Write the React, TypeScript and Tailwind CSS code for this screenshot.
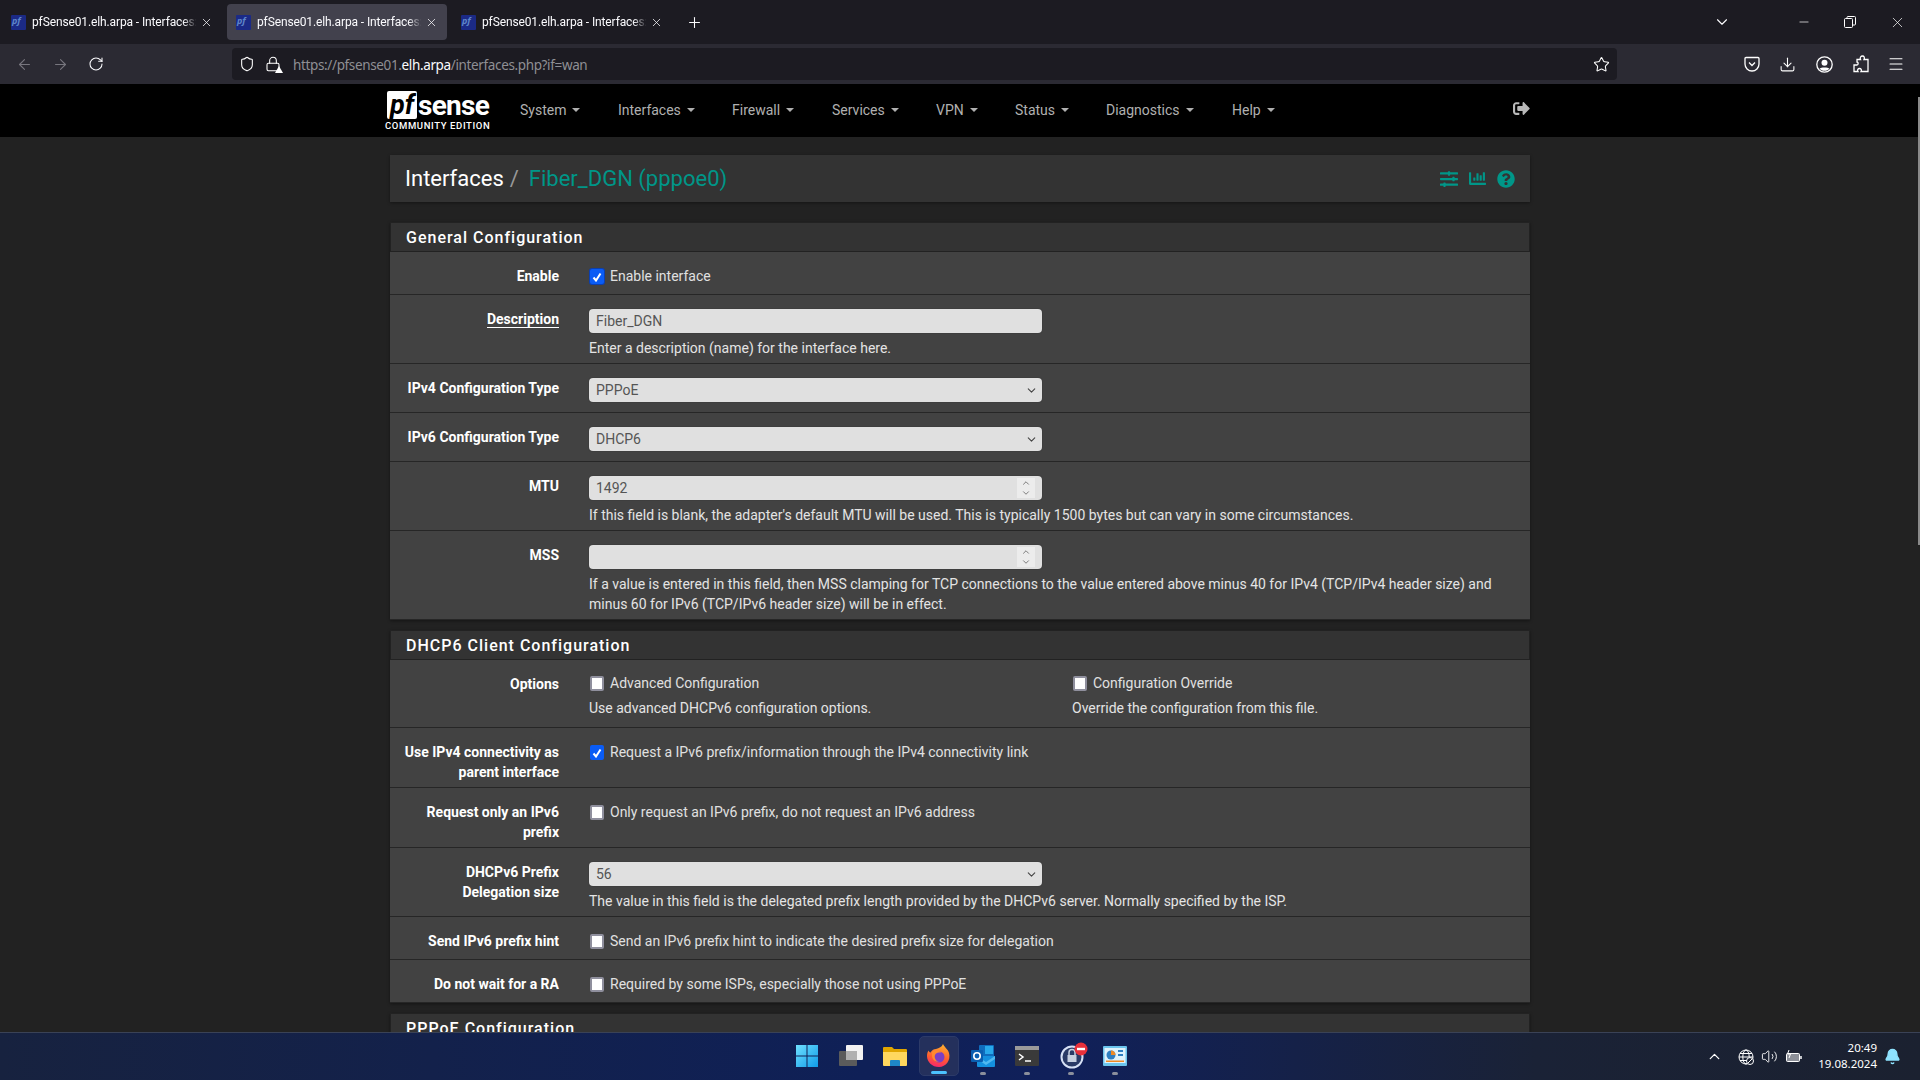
import { ReactNode } from "react";
import {
  ArrowLeft,
  ArrowRight,
  ChevronDown,
  ChevronUp,
  Download,
  Lock,
  Menu,
  Minus,
  Plus,
  RotateCw,
  Shield,
  Star,
  Volume2,
  X,
  Bell,
} from "lucide-react";
import { FaChartBar, FaQuestionCircle, FaSignOutAlt, FaSlidersH } from "react-icons/fa";

const menus = [
  { name: "System", w: "w-[98px]" },
  { name: "Interfaces", w: "w-[114px]" },
  { name: "Firewall", w: "w-[100px]" },
  { name: "Services", w: "w-[104px]" },
  { name: "VPN", w: "w-[79px]" },
  { name: "Status", w: "w-[91px]" },
  { name: "Diagnostics", w: "w-[126px]" },
  { name: "Help", w: "w-[60px]" },
];

export default function App() {
  return (
    <div className="flex h-screen w-full flex-col overflow-hidden bg-[#222222] font-['Roboto',sans-serif] text-sm text-[#e0e0e0]">
      <BrowserChrome />
      <div className="relative min-h-0 flex-1 overflow-hidden">
        <NavBar />
        <main className="mx-auto w-[1140px]">
          <TitleBar />
          <GeneralPanel />
          <DhcpPanel />
          <Panel title="PPPoE Configuration">
            <div className="h-20" />
          </Panel>
        </main>
        <div className="absolute right-0 top-[13px] h-[448px] w-[2px] bg-[#8a8a8a]" />
      </div>
      <Taskbar />
    </div>
  );
}

function BrowserChrome() {
  return (
    <div className="font-['Noto_Sans',sans-serif] text-white">
      {/* Tabs */}
      <div className="flex h-[44px] items-center bg-[#1c1b22] pl-[2px]">
        <BrowserTab />
        <BrowserTab active />
        <BrowserTab />
        <Plus size={17} strokeWidth={1.5} className="ml-[9px] text-[#fbfbfe]" />
        <div className="flex-1" />
        <ChevronDown size={18} strokeWidth={1.5} className="mr-[66px] text-[#fbfbfe]" />
        <Minus size={14} strokeWidth={1.2} className="mr-[33px]" />
        <svg width="12" height="12" viewBox="0 0 12 12" fill="none" stroke="white" className="mr-[33px]">
          <rect x="0.5" y="2.5" width="8" height="9" rx="1" />
          <path d="M3 2.5V1.5a1 1 0 0 1 1-1h6.5a1 1 0 0 1 1 1V8a1 1 0 0 1-1 1H9" />
        </svg>
        <X size={17} strokeWidth={1} className="mr-[14px]" />
      </div>
      {/* Toolbar */}
      <div className="flex h-[40px] items-center bg-[#2b2a33]">
        <ArrowLeft size={17} strokeWidth={1.5} className="ml-[16px] text-[#77767e]" />
        <ArrowRight size={17} strokeWidth={1.5} className="ml-[19px] text-[#77767e]" />
        <RotateCw size={16} strokeWidth={1.6} className="ml-[19px] text-[#fbfbfe]" />
        <div className="ml-[128px] flex h-[32px] w-[1385px] items-center rounded-[4px] bg-[#1c1b22] pl-[7px]">
          <Shield size={16} strokeWidth={1.6} />
          <span className="relative ml-[10px]">
            <Lock size={16} strokeWidth={1.6} />
            <span className="absolute -bottom-[1px] -right-[2px] h-0 w-0 border-x-[4px] border-b-[7px] border-x-transparent border-b-white" />
          </span>
          <span className="ml-[12px] mt-[3px] text-[13.5px] tracking-[-0.36px] text-[#8f8f94]">
            https://pfsense01.<span className="text-[#fbfbfe]">elh.arpa</span>/interfaces.php?if=wan
          </span>
          <div className="flex-1" />
          <Star size={17} strokeWidth={1.5} className="mr-[7px]" />
        </div>
        <PocketIcon />
        <Download size={17} strokeWidth={1.5} className="ml-[19px]" />
        <UserIcon />
        <PuzzleIcon />
        <Menu size={18} strokeWidth={1.4} className="ml-[18px]" />
      </div>
    </div>
  );
}

function BrowserTab({ active }: { active?: boolean }) {
  return (
    <div
      className={`mr-[5px] flex h-[36px] w-[220px] items-center rounded-[4px] pl-[9px] ${active ? "bg-[#42414d]" : ""}`}
    >
      <Favicon />
      <span className="ml-[6px] mt-[2px] w-[168px] whitespace-nowrap font-['Roboto',sans-serif] text-[12px] tracking-[-0.12px] text-[#fbfbfe] [mask-image:linear-gradient(to_right,black_90%,transparent_98%)]">
        pfSense01.elh.arpa - Interfaces:
      </span>
      <X size={13} strokeWidth={1.4} className="text-[#fbfbfe]" />
    </div>
  );
}

function Favicon() {
  return (
    <div className="flex h-[15px] w-[15px] items-start overflow-hidden rounded-[1px] bg-[#1b2a86]">
      <span className="ml-[1px] text-[9px] font-bold italic leading-[11px] text-[#5f86c9]">pf</span>
    </div>
  );
}

function PocketIcon() {
  return (
    <svg width="16" height="16" viewBox="0 0 16 16" fill="none" stroke="white" strokeWidth="1.3" className="ml-[127px]">
      <path d="M2 1.500h12a1 1 0 0 1 1 1V8a7 7 0 0 1-14 0V2.500a1 1 0 0 1 1-1z" />
      <path d="M5 6.500l3 3 3-3" />
    </svg>
  );
}

function UserIcon() {
  return (
    <svg width="17" height="17" viewBox="0 0 17 17" className="ml-[20px]">
      <circle cx="8.500" cy="8.500" r="7.700" fill="none" stroke="white" strokeWidth="1.300" />
      <circle cx="8.500" cy="6.800" r="3" fill="white" />
      <path d="M3.500 12.500c1.500-1.500 8.500-1.500 10 0-1.200 1.500-3 2.300-5 2.300s-3.800-.8-5-2.300z" fill="white" />
    </svg>
  );
}

function PuzzleIcon() {
  return (
    <svg width="16" height="18" viewBox="0 0 16 18" fill="none" stroke="white" strokeWidth="1.300" className="ml-[20px]">
      <path d="M1 16.500V10h3c1.500 0 1.500-3 0-3V4.500h3.500c-1-2 .5-3.500 2-3.500s2.500 1.500 1.500 3.500H15v12H8c1-1.500 0-3-1.500-3S4 15 5 16.500z" />
    </svg>
  );
}

function NavBar() {
  return (
    <nav className="flex h-[53px] items-center bg-black pb-[2px] pl-[385px] text-[#b0b0b0]">
      <Logo />
      <div className="ml-[29px] flex items-center">
        {menus.map((m) => (
          <div key={m.name} className={`flex items-center ${m.w}`}>
            <span>{m.name}</span>
            <span className="ml-[6px] h-0 w-0 border-x-[4px] border-t-[4px] border-x-transparent border-t-[#b0b0b0]" />
          </div>
        ))}
      </div>
      <FaSignOutAlt size={17} className="mb-[3px] ml-[221px] text-[#b8b8b8]" />
    </nav>
  );
}

function Logo() {
  return (
    <div className="mt-[2px] flex w-[106px] flex-col text-white">
      <div className="flex h-[29px] items-end">
        <span className="ml-[2px] flex h-[28px] w-[30px] items-center justify-center rounded-[2px] bg-white text-[27px] font-bold italic leading-none text-black">
          pf
        </span>
        <span className="ml-[1px] text-[28px] font-bold leading-[27px] tracking-[-0.7px]">sense</span>
      </div>
      <span className="mt-[2px] whitespace-nowrap text-[9.5px] font-medium leading-[10px] tracking-[0.62px]">
        COMMUNITY EDITION
      </span>
    </div>
  );
}

function TitleBar() {
  return (
    <div className="mb-[20px] mt-[18px] flex h-[47px] items-center bg-[#333333] pl-[15px] pr-[15px] text-[22px] shadow-[0_1px_3px_rgba(0,0,0,0.4)]">
      <span className="text-white">Interfaces</span>
      <span className="ml-[6px] text-[#999999]">/</span>
      <span className="ml-[10px] text-[#009688]">Fiber_DGN (pppoe0)</span>
      <div className="flex-1" />
      <div className="flex items-center text-[#009688]">
        <FaSlidersH size={18} />
        <FaChartBar size={17} className="ml-[11px]" />
        <FaQuestionCircle size={18} className="ml-[11px]" />
      </div>
    </div>
  );
}

function Panel({ title, children }: { title: string; children: ReactNode }) {
  return (
    <section className="mt-[10px] bg-[#424242] shadow-[0_1px_3px_rgba(0,0,0,0.4)]">
      <h2 className="flex h-[30px] items-center border-x border-t border-b border-[#222222] bg-[#333333] pl-[15px] pt-[2px] text-[16px] font-medium tracking-[1px] text-white">
        {title}
      </h2>
      {children}
    </section>
  );
}

function Row({ label, link, children }: { label: ReactNode; link?: boolean; children: ReactNode }) {
  return (
    <div className="grid grid-cols-[199px_1fr] border-b border-[#262626]">
      <div className="pb-[5px] pl-[10px] pr-[30px] pt-[14px] text-right font-bold leading-[20px] text-white">
        <span className={link ? "border-b border-white" : ""}>{label}</span>
      </div>
      <div className="pb-[8px] pr-[30px] pt-[14px] leading-[20px]">{children}</div>
    </div>
  );
}

function Check({ checked, focused, label }: { checked?: boolean; focused?: boolean; label: string }) {
  return (
    <label className="flex h-[20px] items-center">
      <span
        className={`ml-[1px] mt-[1px] flex h-[15px] w-[14px] items-center justify-center rounded-[2px] ${checked ? "bg-[#0a5cf5]" : "border-2 border-[#8f8f9d] bg-white"} ${focused ? "ring-1 ring-[#0b3fb0]" : ""}`}
      >
        {checked && (
          <svg width="10" height="10" viewBox="0 0 10 10" fill="none" stroke="white" strokeWidth="2">
            <path d="M1.500 5.500l2.500 3 4.500-7" />
          </svg>
        )}
      </span>
      <span className="ml-[6px]">{label}</span>
    </label>
  );
}

function Help({ children }: { children: ReactNode }) {
  return <div className="mt-[5px] leading-[20px] text-[#e4e4e4]">{children}</div>;
}

const fieldClass =
  "h-[24px] w-[453px] rounded-[4px] bg-[#e0e0e0] pl-[7px] text-sm text-[#555555] outline-none shadow-[0_0_1px_rgba(0,0,0,0.5)]";

function Field({ value }: { value: string }) {
  return <input readOnly defaultValue={value} className={fieldClass} />;
}

function NumberField({ value }: { value: string }) {
  return (
    <div className="relative h-[24px] w-[453px]">
      <input readOnly defaultValue={value} className={fieldClass} />
      <div className="absolute right-[7px] top-[2px] flex h-[20px] w-[18px] flex-col items-center justify-center bg-[#ececec] text-[#666666]">
        <ChevronUp size={10} strokeWidth={2} />
        <ChevronDown size={10} strokeWidth={2} />
      </div>
    </div>
  );
}

function SelectField({ value }: { value: string }) {
  return (
    <div className="relative h-[24px] w-[453px]">
      <select defaultValue={value} className={`${fieldClass} appearance-none`}>
        <option>{value}</option>
      </select>
      <ChevronDown size={13} strokeWidth={2} className="absolute right-[4px] top-[6px] text-[#444444]" />
    </div>
  );
}

function GeneralPanel() {
  return (
    <Panel title="General Configuration">
      <Row label="Enable">
        <Check checked focused label="Enable interface" />
      </Row>
      <Row label="Description" link>
        <div className="-mb-[3px]">
          <Field value="Fiber_DGN" />
          <Help>Enter a description (name) for the interface here.</Help>
        </div>
      </Row>
      <Row label="IPv4 Configuration Type">
        <div className="mb-[2px]">
          <SelectField value="PPPoE" />
        </div>
      </Row>
      <Row label="IPv6 Configuration Type">
        <div className="mb-[2px]">
          <SelectField value="DHCP6" />
        </div>
      </Row>
      <Row label="MTU">
        <div className="-mb-[3px]">
          <NumberField value="1492" />
          <Help>If this field is blank, the adapter's default MTU will be used. This is typically 1500 bytes but can vary in some circumstances.</Help>
        </div>
      </Row>
      <Row label="MSS">
        <div className="-mb-[3px]">
          <NumberField value="" />
          <Help>
            If a value is entered in this field, then MSS clamping for TCP connections to the value entered above minus 40 for IPv4 (TCP/IPv4 header size) and minus 60 for IPv6 (TCP/IPv6 header size) will be in effect.
          </Help>
        </div>
      </Row>
    </Panel>
  );
}

function DhcpPanel() {
  return (
    <Panel title="DHCP6 Client Configuration">
      <Row label="Options">
        <div className="-mt-[1px] mb-[1px] grid grid-cols-[484px_1fr]">
          <div>
            <Check label="Advanced Configuration" />
            <Help>Use advanced DHCPv6 configuration options.</Help>
          </div>
          <div className="-ml-[1px]">
            <Check label="Configuration Override" />
            <Help>Override the configuration from this file.</Help>
          </div>
        </div>
      </Row>
      <Row label="Use IPv4 connectivity as parent interface">
        <Check checked label="Request a IPv6 prefix/information through the IPv4 connectivity link" />
      </Row>
      <Row label="Request only an IPv6 prefix">
        <Check label="Only request an IPv6 prefix, do not request an IPv6 address" />
      </Row>
      <Row label="DHCPv6 Prefix Delegation size">
        <div className="-mb-[3px]">
          <SelectField value="56" />
          <Help>The value in this field is the delegated prefix length provided by the DHCPv6 server. Normally specified by the ISP.</Help>
        </div>
      </Row>
      <Row label="Send IPv6 prefix hint">
        <Check label="Send an IPv6 prefix hint to indicate the desired prefix size for delegation" />
      </Row>
      <Row label="Do not wait for a RA">
        <Check label="Required by some ISPs, especially those not using PPPoE" />
      </Row>
    </Panel>
  );
}

function TaskIcon({ active, dot, children }: { active?: boolean; dot?: boolean; children: ReactNode }) {
  return (
    <div
      className={`relative flex h-[40px] w-[40px] items-center justify-center rounded-[5px] ${active ? "border border-[#2c3a68] bg-[#24305c]" : ""}`}
    >
      {children}
      {active && <span className="absolute bottom-[1px] h-[3px] w-[16px] rounded-full bg-[#4cc2ff]" />}
      {dot && <span className="absolute bottom-[1px] h-[3px] w-[6px] rounded-full bg-[#8b8f9c]" />}
    </div>
  );
}

function Taskbar() {
  return (
    <footer className="relative flex h-[48px] shrink-0 items-center justify-center border-t border-[#3a4256] bg-[linear-gradient(90deg,#17223f_0%,#0f2057_45%,#10205a_55%,#1a2236_80%,#1b2130_100%)] font-['Noto_Sans',sans-serif]">
      <div className="-mt-[1px] ml-[1px] flex items-center gap-[4px]">
        <TaskIcon>
          <svg width="24" height="24" viewBox="0 0 24 24">
            <defs>
              <linearGradient id="win" x1="0" y1="0" x2="1" y2="1">
                <stop offset="0" stopColor="#6fe0ff" />
                <stop offset="1" stopColor="#0f9be8" />
              </linearGradient>
            </defs>
            <path fill="url(#win)" d="M1 1h10.500v10.500H1zM12.500 1H23v10.500H12.500zM1 12.500h10.500V23H1zM12.500 12.500H23V23H12.500z" />
          </svg>
        </TaskIcon>
        <TaskIcon>
          <svg width="24" height="24" viewBox="0 0 24 24">
            <rect x="7" y="1" width="17" height="15" rx="1" fill="#f2f2f2" />
            <rect x="0" y="7" width="18" height="15" rx="1" fill="#5b5b5b" />
            <rect x="7" y="7" width="11" height="9" fill="#b0b0b0" />
          </svg>
        </TaskIcon>
        <TaskIcon>
          <svg width="24" height="24" viewBox="0 0 24 24">
            <path fill="#e0a500" d="M0 4a1 1 0 0 1 1-1h8l2 2h12a1 1 0 0 1 1 1v3H0z" />
            <path fill="#ffd75e" d="M0 8h24v13a1 1 0 0 1-1 1H1a1 1 0 0 1-1-1z" />
            <path fill="#1e88c9" d="M7 17a1 1 0 0 1 1-1h8a1 1 0 0 1 1 1v5H7z" />
          </svg>
        </TaskIcon>
        <TaskIcon active>
          <svg width="24" height="24" viewBox="0 0 24 24">
            <defs>
              <linearGradient id="fox" x1="0.6" y1="0" x2="0.4" y2="1">
                <stop offset="0" stopColor="#ffb02e" />
                <stop offset="0.6" stopColor="#ff5d2e" />
                <stop offset="1" stopColor="#f5266f" />
              </linearGradient>
            </defs>
            <path fill="url(#fox)" d="M16 0c1 3 5 5 6 9 2 7-3 14-10 14S0 18 0 12c0-2 .5-4 1.500-5.500C2 8 3 8.500 3.500 8.500 5 6 7 5 9 5c3-1 6-2 7-5z" />
            <circle cx="12" cy="13" r="5.500" fill="#7b3fc4" />
            <path fill="#ff8a2e" d="M5 8c3-2 7-2 9 1-3-1-5 0-6 2-1 3 1 6 4 7-4 0-7-3-7-6 0-2 0-3 0-4z" />
          </svg>
        </TaskIcon>
        <TaskIcon dot>
          <svg width="24" height="24" viewBox="0 0 24 24">
            <rect x="8" y="1" width="15" height="20" rx="1" fill="#0f6cbd" />
            <rect x="14" y="2" width="8" height="8" fill="#28a8ea" />
            <path fill="#1490df" d="M6 12l18 0v10a1 1 0 0 1-1 1H7a1 1 0 0 1-1-1z" />
            <path fill="#50b8f0" d="M6 12l9 6 9-6v3l-9 6-9-6z" />
            <rect x="0" y="6" width="12" height="12" rx="1" fill="#0a5eb0" />
            <circle cx="6" cy="12" r="3.200" fill="none" stroke="white" strokeWidth="1.600" />
          </svg>
        </TaskIcon>
        <TaskIcon dot>
          <svg width="24" height="20" viewBox="0 0 24 20">
            <rect width="24" height="20" rx="1" fill="#3a3a3a" />
            <rect width="24" height="4" fill="#9a9a9a" />
            <path d="M4 8l4 3-4 3" fill="none" stroke="white" strokeWidth="1.500" />
            <path d="M10 15h6" stroke="white" strokeWidth="1.500" />
          </svg>
        </TaskIcon>
        <TaskIcon dot>
          <svg width="28" height="28" viewBox="0 0 28 28" className="ml-[6px]">
            <circle cx="12" cy="15" r="10.500" fill="#2a3a66" stroke="#d7e1f5" strokeWidth="2" />
            <path d="M9 13v-2.500a3 3 0 0 1 6 0V13" fill="none" stroke="#c7d0e0" strokeWidth="1.500" />
            <rect x="7.500" y="13" width="9" height="7" fill="#c7d0e0" />
            <circle cx="21" cy="7" r="6.500" fill="#e8303a" />
            <rect x="17" y="5.800" width="8" height="2.400" fill="white" />
          </svg>
        </TaskIcon>
        <TaskIcon dot>
          <svg width="24" height="20" viewBox="0 0 24 20">
            <rect width="24" height="20" rx="1" fill="#6cc5ee" />
            <rect x="1.500" y="2" width="21" height="15" fill="#dff3fc" />
            <circle cx="8" cy="9" r="4.500" fill="#2f7fc1" />
            <path d="M8 9V4.500A4.500 4.500 0 0 1 12.500 9z" fill="#f08a24" />
            <rect x="15" y="4" width="5" height="2" fill="#2f7fc1" />
            <rect x="15" y="8" width="5" height="2" fill="#2f7fc1" />
            <rect x="3" y="14.500" width="18" height="1.500" fill="#f08a24" />
          </svg>
        </TaskIcon>
      </div>
      {/* System tray */}
      <div className="absolute right-[19px] top-0 flex h-full items-center text-white">
        <ChevronUp size={17} strokeWidth={1.8} />
        <svg width="16" height="16" viewBox="0 0 16 16" fill="none" stroke="white" strokeWidth="1" className="ml-[15px]">
          <circle cx="8" cy="8" r="7" />
          <ellipse cx="8" cy="8" rx="3.200" ry="7" />
          <path d="M1 8h14M2 4.500h12M2 11.500h12" />
          <circle cx="12" cy="12" r="3.500" fill="#1b2130" stroke="white" />
          <path d="M10 14l4-4" />
        </svg>
        <Volume2 size={17} strokeWidth={1.3} className="ml-[7px]" />
        <svg width="18" height="14" viewBox="0 0 18 14" fill="none" stroke="white" className="ml-[7px]">
          <rect x="1.500" y="3.500" width="13" height="8" rx="1" fill="white" fillOpacity="0.5" />
          <path d="M16 6v3" strokeWidth="1.500" />
          <path d="M4 0L2.500 4h3L4 8" strokeWidth="1" />
        </svg>
        <div className="-mt-[1px] ml-[4px] w-[70px] text-right text-[11.5px] leading-[16px] text-white">
          <div>20:49</div>
          <div>19.08.2024</div>
        </div>
        <Bell size={17} fill="#8fe3ff" stroke="#8fe3ff" className="ml-[7px]" />
      </div>
    </footer>
  );
}
